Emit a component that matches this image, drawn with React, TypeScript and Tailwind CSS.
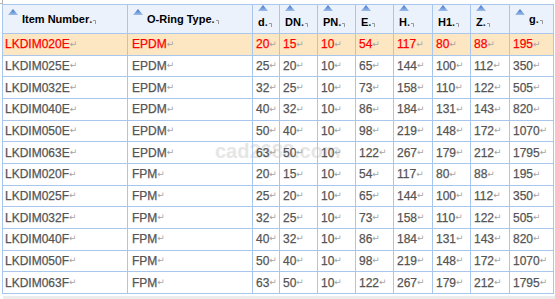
import React from "react";

const cols = "grid grid-cols-[125px_125px_27px_38px_38px_38px_39px_38px_39px_44px]";

const headers: { label: string; stacked: boolean }[] = [
  { label: "Item Number", stacked: false },
  { label: "O-Ring Type", stacked: false },
  { label: "d", stacked: true },
  { label: "DN", stacked: true },
  { label: "PN", stacked: true },
  { label: "E", stacked: true },
  { label: "H", stacked: true },
  { label: "H1", stacked: true },
  { label: "Z", stacked: true },
  { label: "g", stacked: false },
];

const rows: string[][] = [
  ["LKDIM020E", "EPDM", "20", "15", "10", "54", "117", "80", "88", "195"],
  ["LKDIM025E", "EPDM", "25", "20", "10", "65", "144", "100", "112", "350"],
  ["LKDIM032E", "EPDM", "32", "25", "10", "73", "158", "110", "122", "505"],
  ["LKDIM040E", "EPDM", "40", "32", "10", "86", "184", "131", "143", "820"],
  ["LKDIM050E", "EPDM", "50", "40", "10", "98", "219", "148", "172", "1070"],
  ["LKDIM063E", "EPDM", "63", "50", "10", "122", "267", "179", "212", "1795"],
  ["LKDIM020F", "FPM", "20", "15", "10", "54", "117", "80", "88", "195"],
  ["LKDIM025F", "FPM", "25", "20", "10", "65", "144", "100", "112", "350"],
  ["LKDIM032F", "FPM", "32", "25", "10", "73", "158", "110", "122", "505"],
  ["LKDIM040F", "FPM", "40", "32", "10", "86", "184", "131", "143", "820"],
  ["LKDIM050F", "FPM", "50", "40", "10", "98", "219", "148", "172", "1070"],
  ["LKDIM063F", "FPM", "63", "50", "10", "122", "267", "179", "212", "1795"],
];

function SortArrow() {
  return (
    <svg width="10" height="6" viewBox="0 0 10 6" className="shrink-0">
      <defs>
        <linearGradient id="arrowFill" x1="0" y1="0" x2="0" y2="1">
          <stop offset="0" stopColor="#3f73c9" />
          <stop offset="1" stopColor="#9dbdeb" />
        </linearGradient>
      </defs>
      <path d="M5 0L10 6H0Z" fill="url(#arrowFill)" />
    </svg>
  );
}

function CellEnd() {
  return (
    <span className="inline-flex items-end">
      <span className="text-[#333]">.</span>
      <svg width="3" height="4" viewBox="0 0 3 4" className="mb-[2px] ml-[1px]">
        <path d="M0 0.5H2.5V4" fill="none" stroke="#9a9a9a" strokeWidth="1" />
      </svg>
    </span>
  );
}

function HeaderCell({ label, stacked }: { label: string; stacked: boolean }) {
  if (stacked) {
    return (
      <div className="flex flex-col items-start border-l border-[#a9c6ec] pl-[5px]">
        <SortArrow />
        <div className="mt-[5px] flex items-end leading-[13px]">
          {label}
          <CellEnd />
        </div>
      </div>
    );
  }
  return (
    <div className="flex items-center border-l border-[#a9c6ec] pl-[5px]">
      <div className="mt-[4px] self-start">
        <SortArrow />
      </div>
      <div className="ml-[4px] flex items-end leading-[13px]">
        {label}
        <CellEnd />
      </div>
    </div>
  );
}

export default function App() {
  return (
    <div className="relative h-[299px] w-[555px] overflow-hidden bg-white font-['Liberation_Sans',Arial,sans-serif]">
      <div className="absolute left-0 top-0 h-[4px] w-[3px] border-b border-r border-[#b5b5b5]" />
      <div className="pointer-events-none absolute left-[215px] top-[141px] select-none text-[20px] font-bold leading-none text-[#e6e6e6]">
        cad2688.com
      </div>

      <div className="relative ml-[2px] mt-[4px] w-[552px] border-r border-t border-[#a9c6ec]">
        <div className={`${cols} h-[29px] border-b border-[#a9c6ec] bg-[#ebf2fc] text-[11px] font-bold text-black`}>
          {headers.map((h) => (
            <HeaderCell key={h.label} label={h.label} stacked={h.stacked} />
          ))}
        </div>

        {rows.map((row, i) => (
          <div
            key={row[0]}
            className={`${cols} h-[21.67px] border-b border-[#a9c6ec] text-[12px] [-webkit-text-stroke:0.25px_currentColor] ${
              i === 0 ? "bg-[#fde7c3] text-[#ff0000]" : "text-[#555555]"
            }`}
          >
            {row.map((v, j) => (
              <div
                key={j}
                className={`flex items-center border-l border-[#a9c6ec] ${
                  j === 0 ? "pl-[2px]" : j === 1 ? "pl-[4px]" : "pl-[3px]"
                }`}
              >
                {v}
                <span className="font-['DejaVu_Sans',sans-serif] text-[9px] text-[#a3a3a3] [-webkit-text-stroke:0px]">↵</span>
              </div>
            ))}
          </div>
        ))}
      </div>

      <div className="ml-[3px] mt-[2px] h-[4px] bg-[#ececec]" />
    </div>
  );
}
